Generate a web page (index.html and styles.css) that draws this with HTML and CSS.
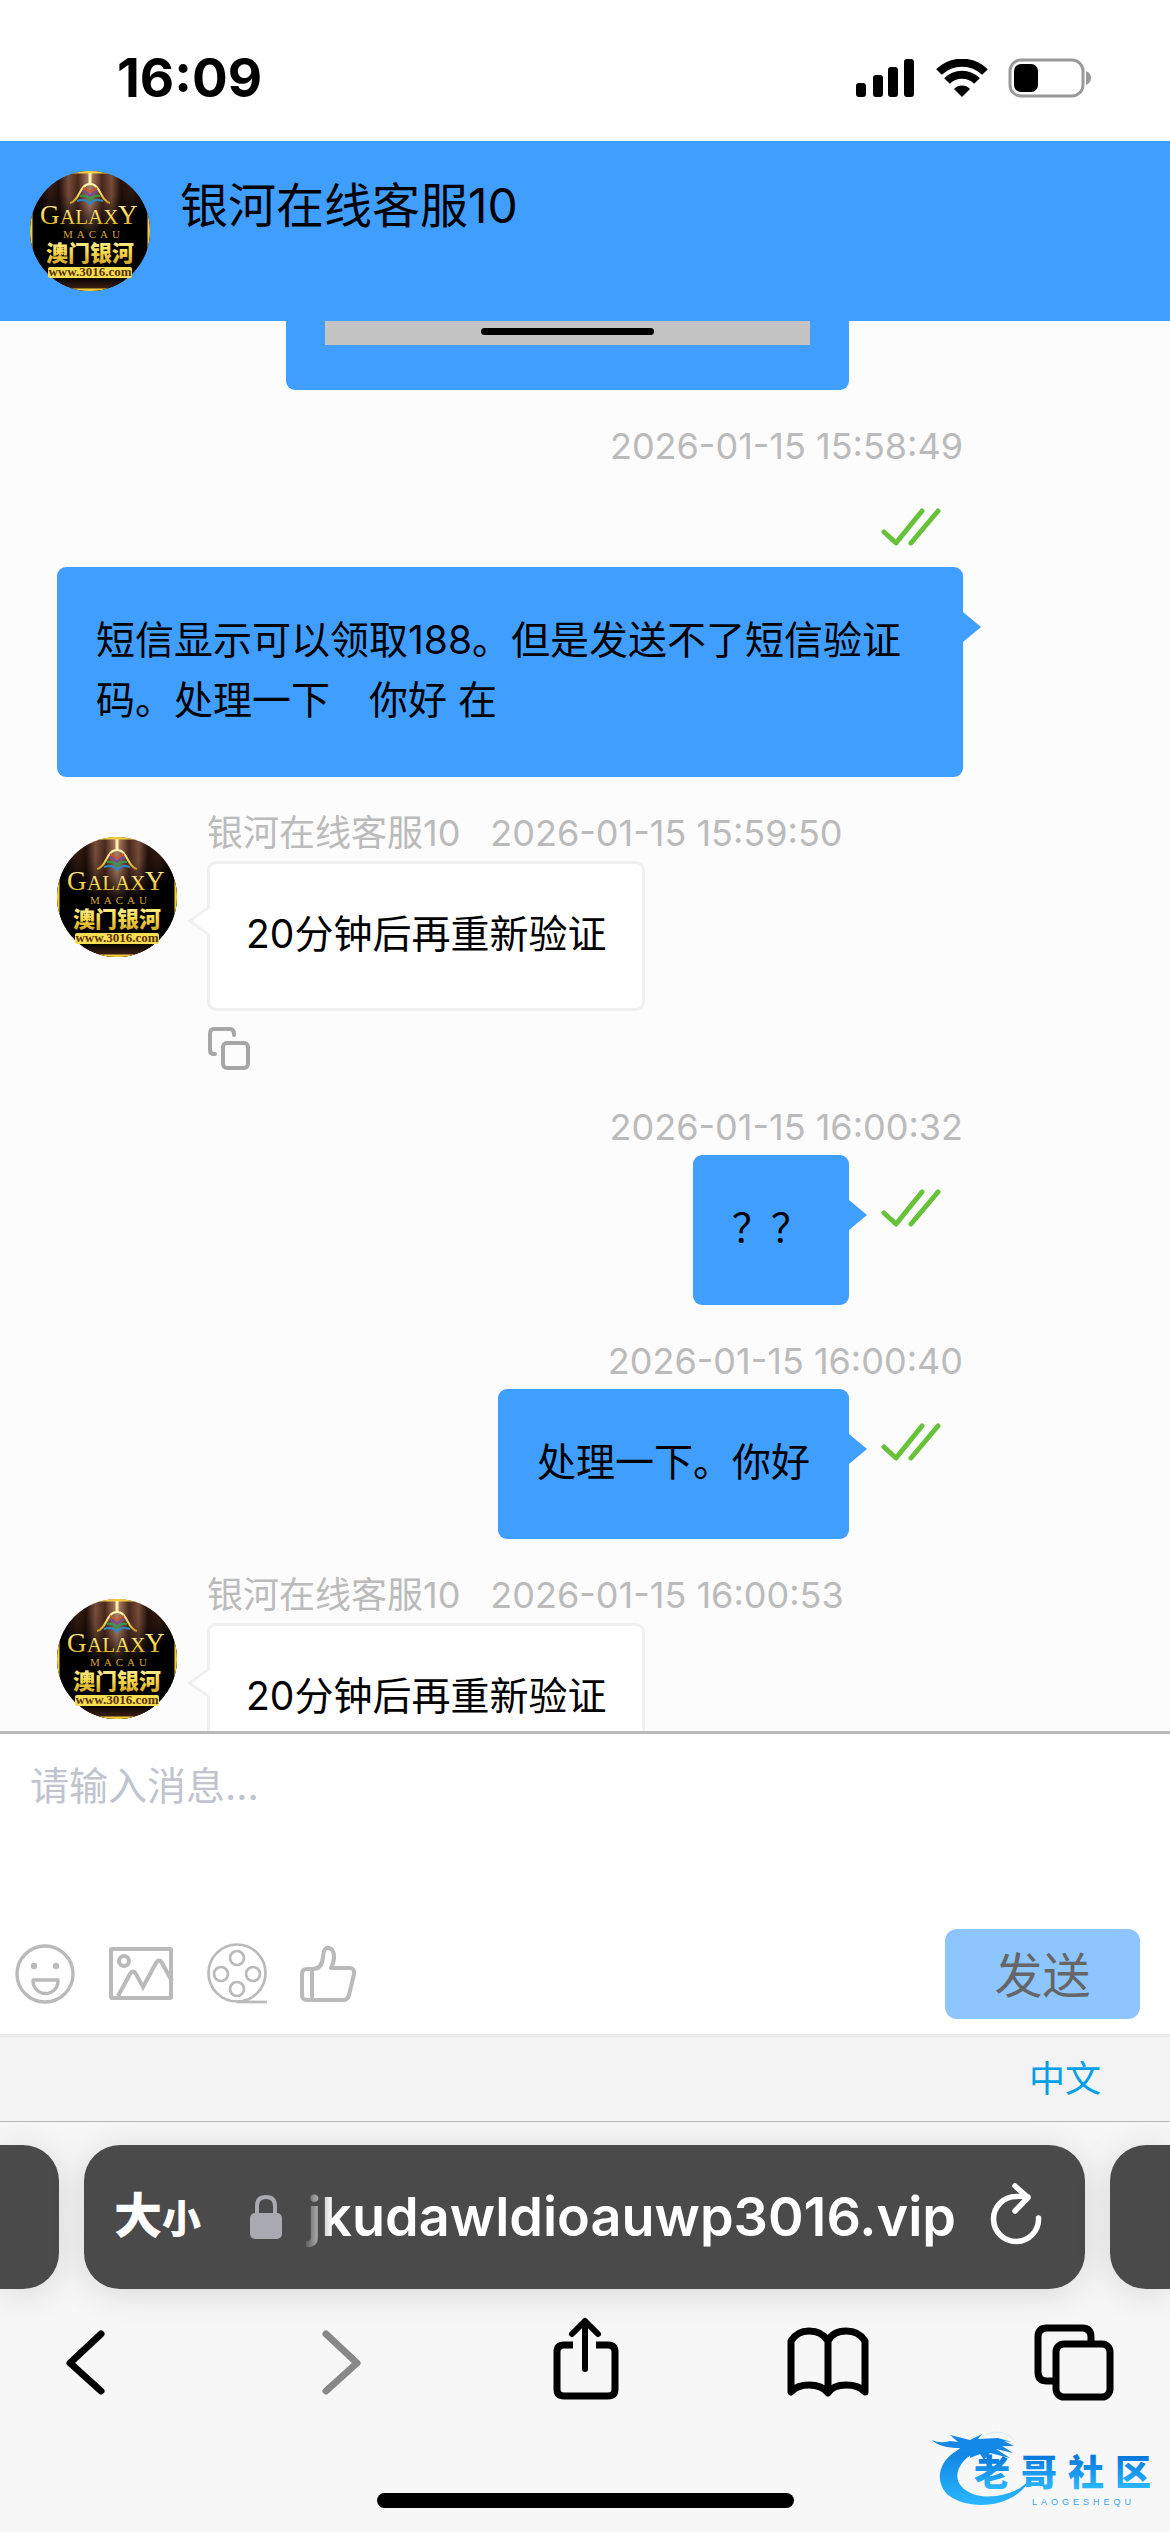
FILE: index.html
```html
<!DOCTYPE html>
<html lang="zh-CN">
<head>
<meta charset="utf-8">
<meta name="viewport" content="width=device-width">
<title>银河在线客服10</title>
<link rel="stylesheet" href="styles.css">
</head>
<body>
<svg class="defs" aria-hidden="true">
  <defs>
    <linearGradient id="gold" x1="0" y1="0" x2="0" y2="1">
      <stop offset="0" stop-color="#fff6b8"/><stop offset="0.55" stop-color="#f5d84a"/><stop offset="1" stop-color="#c99a1e"/>
    </linearGradient>
    <linearGradient id="curtain" x1="0" y1="0" x2="1" y2="0">
      <stop offset="0" stop-color="#2a140c"/><stop offset="0.16" stop-color="#5d3322"/><stop offset="0.24" stop-color="#2b130b"/>
      <stop offset="0.32" stop-color="#8a5a43"/><stop offset="0.4" stop-color="#4f2b1e"/><stop offset="0.5" stop-color="#c08c70"/>
      <stop offset="0.6" stop-color="#4f2b1e"/><stop offset="0.68" stop-color="#8a5a43"/><stop offset="0.76" stop-color="#2b130b"/>
      <stop offset="0.86" stop-color="#5d3322"/><stop offset="1" stop-color="#2a140c"/>
    </linearGradient>
    <radialGradient id="dark" gradientUnits="userSpaceOnUse" cx="60" cy="0" r="74">
      <stop offset="0" stop-color="#000" stop-opacity="0"/><stop offset="0.45" stop-color="#000" stop-opacity="0.2"/>
      <stop offset="0.9" stop-color="#000"/><stop offset="1" stop-color="#000"/>
    </radialGradient>
    <linearGradient id="floor" x1="0" y1="0" x2="0" y2="1">
      <stop offset="0" stop-color="#000"/><stop offset="1" stop-color="#4a2618"/>
    </linearGradient>
    <linearGradient id="brand" gradientUnits="userSpaceOnUse" x1="0" y1="12" x2="0" y2="80">
      <stop offset="0" stop-color="#0878dc"/><stop offset="1" stop-color="#2bb8ff"/>
    </linearGradient>
    <linearGradient id="brandText" gradientUnits="userSpaceOnUse" x1="0" y1="30" x2="0" y2="63">
      <stop offset="0" stop-color="#0878dc"/><stop offset="1" stop-color="#2bb8ff"/>
    </linearGradient>
    <clipPath id="disc"><circle cx="60" cy="60" r="60"/></clipPath>
    <symbol id="galaxy" viewBox="0 0 120 120">
      <g clip-path="url(#disc)">
        <rect width="120" height="120" fill="url(#curtain)"/>
        <rect width="120" height="120" fill="url(#dark)"/>
        <rect y="106" width="120" height="14" fill="url(#floor)"/>
        <path d="M1 0V120M119 0V120M0 1H120M0 119H120" stroke="#f2cd3c" stroke-width="3"/>
        <path d="M60 2V13" stroke="#fff2b0" stroke-width="3"/>
        <path d="M40 32C50 30 49 13 60 13S70 30 80 32" fill="none" stroke="url(#gold)" stroke-width="2"/>
        <path d="M53 17 60 21 67 17" fill="none" stroke="#c9582c" stroke-width="2"/>
        <path d="M52 20Q57 21 60 25Q63 21 68 20" fill="none" stroke="#7a4a9c" stroke-width="2"/>
        <path d="M50 25Q57 24 60 29Q63 24 70 25" fill="none" stroke="#2e9a4b" stroke-width="2"/>
        <path d="M47 30Q56 27 60 33Q64 27 73 30" fill="none" stroke="#2b87c8" stroke-width="2"/>
      </g>
      <text class="logo-serif" x="10" y="53" font-size="27" fill="url(#gold)">G</text>
      <text class="logo-serif" x="30" y="53" font-size="21" fill="url(#gold)">ALAX</text>
      <text class="logo-serif" x="88" y="53" font-size="27" fill="url(#gold)">Y</text>
      <text class="logo-serif" x="33" y="67" font-size="11" letter-spacing="4" fill="#d6a33c">MACAU</text>
      <text class="logo-han" x="16" y="90" font-size="22" fill="url(#gold)">澳门银河</text>
      <rect x="18" y="96" width="84" height="11" rx="2" fill="#f6df52"/>
      <text class="logo-url" x="60" y="105" font-size="13" text-anchor="middle" fill="#5a3005">www.3016.com</text>
    </symbol>
    <symbol id="ticks" viewBox="0 0 60 38">
      <path d="M3 24 15 35 41 3M30 35 57 3" fill="none" stroke="#67c23a" stroke-width="5" stroke-linecap="round" stroke-linejoin="round"/>
    </symbol>
  </defs>
</svg>

<div class="screen">
  <div class="status-bar">
    <span class="clock">16:09</span>
    <div class="status-icons">
      <svg width="60" height="38" viewBox="0 0 60 38"><rect y="24" width="10" height="14" rx="3"/><rect x="17" y="16" width="10" height="22" rx="3"/><rect x="32" y="8" width="10" height="30" rx="3"/><rect x="48" width="10" height="38" rx="3"/></svg>
      <svg width="52" height="38" viewBox="0 0 52 38"><g fill="none" stroke="#000" stroke-width="8"><path d="M3 13A33 33 0 0 1 49 13"/><path d="M11 22A21 21 0 0 1 41 22"/></g><path d="M26 38 18 30A11 11 0 0 1 34 30Z"/></svg>
      <svg width="84" height="40" viewBox="0 0 84 40"><rect x="2" y="2" width="73" height="36" rx="11" fill="none" stroke="#9a9a9a" stroke-width="3"/><rect x="6" y="6" width="24" height="28" rx="7"/><path d="M78 13Q83 15 83 20T78 27Z" fill="#9a9a9a"/></svg>
    </div>
  </div>

  <header class="chat-header">
    <svg class="avatar" role="img" aria-label="头像"><use href="#galaxy"/></svg>
    <h1 class="chat-title">银河在线客服10</h1>
  </header>

  <main class="messages">
    <div class="message own">
      <div class="own-row">
        <div class="bubble picture"><div class="picture-end"><span></span></div></div>
        <div class="receipt"></div>
      </div>
    </div>
    <div class="message own">
      <div class="meta"><time>2026-01-15 15:58:49</time></div>
      <div class="own-row stacked">
        <div class="bubble blue">短信显示可以领取188。但是发送不了短信验证码。处理一下　你好 在</div>
        <div class="receipt"><svg class="ticks"><use href="#ticks"/></svg></div>
      </div>
    </div>
    <div class="message agent">
      <svg class="avatar" role="img" aria-label="头像"><use href="#galaxy"/></svg>
      <div class="agent-body">
        <div class="meta"><span>银河在线客服10</span><time>2026-01-15 15:59:50</time></div>
        <div class="bubble white">20分钟后再重新验证</div>
        <button class="copy" type="button" aria-label="复制"><svg width="44" height="44" viewBox="0 0 44 44"><g fill="none" stroke="#a6a6a6" stroke-width="4" stroke-linecap="round"><path d="M8 27H7Q3 27 3 23V7Q3 2 7 2H23Q27 2 27 7V8"/><rect x="16" y="16" width="25" height="25" rx="4"/></g></svg></button>
      </div>
    </div>
    <div class="message own">
      <div class="meta"><time>2026-01-15 16:00:32</time></div>
      <div class="own-row">
        <div class="bubble blue">？？</div>
        <div class="receipt"><svg class="ticks"><use href="#ticks"/></svg></div>
      </div>
    </div>
    <div class="message own">
      <div class="meta"><time>2026-01-15 16:00:40</time></div>
      <div class="own-row">
        <div class="bubble blue">处理一下。你好</div>
        <div class="receipt"><svg class="ticks"><use href="#ticks"/></svg></div>
      </div>
    </div>
    <div class="message agent">
      <svg class="avatar" role="img" aria-label="头像"><use href="#galaxy"/></svg>
      <div class="agent-body">
        <div class="meta"><span>银河在线客服10</span><time>2026-01-15 16:00:53</time></div>
        <div class="bubble white">20分钟后再重新验证</div>
      </div>
    </div>
  </main>

  <form class="composer">
    <textarea class="entry" aria-label="消息" placeholder="请输入消息..."></textarea>
    <div class="tools">
      <button type="button" aria-label="表情"><svg width="60" height="60" viewBox="0 0 60 60"><g fill="none" stroke="#bababa" stroke-width="3.4"><circle cx="30" cy="30" r="28"/><path d="M18 36H43V37A12 12 0 0 1 18 37Z" stroke-linejoin="round"/></g><circle cx="19" cy="22" r="3.2" fill="#bababa"/><circle cx="41" cy="22" r="3.2" fill="#bababa"/></svg></button>
      <button type="button" aria-label="图片"><svg width="66" height="60" viewBox="0 0 66 60"><g fill="none" stroke="#bababa" stroke-width="4"><rect x="3" y="5" width="60" height="49" rx="1"/><circle cx="16" cy="17" r="5"/><path d="M10 52 22 30Q25 25 28 30L35 43 48 19Q51 14 54 19L64 37"/></g></svg></button>
      <button type="button" aria-label="视频"><svg width="60" height="62" viewBox="0 0 60 62"><g fill="none" stroke="#bababa" stroke-width="2.7"><circle cx="30" cy="30" r="28.5"/><path d="M30 59H60"/><circle cx="30" cy="15" r="7"/><circle cx="30" cy="46" r="7"/><circle cx="14" cy="31" r="7"/><circle cx="46" cy="31" r="7"/></g></svg></button>
      <button type="button" aria-label="点赞"><svg width="58" height="58" viewBox="0 0 58 58"><g fill="none" stroke="#bababa" stroke-width="4" stroke-linejoin="round"><path d="M7 24H13Q22 24 23 12L24 6Q26 2 29 3Q34 4 34 12Q34 18 31 23H49Q55 23 54 29L49 50Q48 55 43 55H7Q2 55 2 50V29Q2 24 7 24Z"/><path d="M12 24V55"/></g></svg></button>
      <button class="send" type="submit" disabled>发送</button>
    </div>
  </form>

  <div class="language"><a href="#">中文</a></div>

  <footer class="browser">
    <div class="tabs">
      <div class="tab tab-previous"></div>
      <div class="tab tab-current">
        <button class="reader" type="button" aria-label="大小"><b>大</b><b class="small">小</b></button>
        <svg class="lock" width="32" height="46" viewBox="0 0 32 46"><path d="M7 22V12Q7 3 16 3T25 12V22" fill="none" stroke="#a9aab1" stroke-width="4"/><rect y="19" width="32" height="26" rx="5" fill="#a9aab1"/></svg>
        <div class="address"><span>jkudawldioauwp3016.vip</span></div>
        <button class="reload" type="button" aria-label="刷新"><svg width="54" height="68" viewBox="0 0 54 68"><path d="M50.5 35A22.5 22.5 0 1 1 28 13.5Q34 13 40 14M27 3 40 14.500 27 28" fill="none" stroke="#fff" stroke-width="5.500" stroke-linecap="round" stroke-linejoin="round"/></svg></button>
      </div>
      <div class="tab tab-next"></div>
    </div>
    <nav class="browser-nav">
      <button type="button" aria-label="后退"><svg width="96" height="88" viewBox="0 0 96 88"><path d="M64 18 33 47 64 75" fill="none" stroke="#000" stroke-width="7" stroke-linecap="round" stroke-linejoin="round"/></svg></button>
      <button type="button" aria-label="前进" disabled><svg width="96" height="88" viewBox="0 0 96 88"><path d="M42 18 73 47 42 75" fill="none" stroke="#888" stroke-width="7" stroke-linecap="round" stroke-linejoin="round"/></svg></button>
      <button type="button" aria-label="分享"><svg width="96" height="88" viewBox="0 0 96 88"><g fill="none" stroke="#000" stroke-width="7" stroke-linejoin="round"><path d="M41 29H32Q25 29 25 36V73Q25 80 32 80H76Q83 80 83 73V36Q83 29 76 29H64"/><path d="M53 53V5M40 18 53 5 66 18" stroke-width="6" stroke-linecap="round"/></g></svg></button>
      <button type="button" aria-label="书签"><svg width="96" height="88" viewBox="0 0 96 88"><path d="M49 77Q43 69 30 69Q18 69 12 76V25Q18 15 30 15Q43 15 49 25Q54 15 67 15Q80 15 86 25V76Q80 69 67 69Q54 69 49 77ZV25" fill="none" stroke="#000" stroke-width="7" stroke-linejoin="round"/></svg></button>
      <button type="button" aria-label="标签页"><svg width="96" height="88" viewBox="0 0 96 88"><g fill="none" stroke="#000" stroke-width="7"><path d="M29 65H21Q12 65 12 56V21Q12 12 21 12H56Q65 12 65 21V26"/><rect x="30" y="28" width="54" height="53" rx="8"/></g></svg></button>
    </nav>
    <div class="home-indicator"></div>
  </footer>

  <svg class="watermark" width="232" height="84" viewBox="0 0 232 84" role="img" aria-label="老哥社区">
    <path d="M38 20C10 28 2 54 18 69C40 86 86 82 101 52C88 70 54 76 37 65C20 55 26 34 50 24Z" fill="url(#brand)"/>
    <path d="M2 14Q10 18 20 15L28 16 20 9 40 14 52 8 48 13 68 12 82 16 74 15 84 20 72 20 83 27 66 23 80 32 60 27 54 34 50 28 40 32 40 26Q30 26 22 30L30 22Q10 22 2 14Z" fill="#1488e6"/>
    <path d="M56 8Q74 2 84 14" fill="none" stroke="#d5eafa"/>
    <text class="brand-name" x="44" y="60" font-size="36" fill="url(#brandText)">老</text>
    <text class="brand-name" x="91" y="60" font-size="36" fill="url(#brandText)">哥</text>
    <text class="brand-name" x="138" y="60" font-size="36" fill="url(#brandText)">社</text>
    <text class="brand-name" x="185" y="60" font-size="36" fill="url(#brandText)">区</text>
    <text class="brand-latin" x="102" y="79" font-size="9" letter-spacing="4" fill="#35a4ee">LAOGESHEQU</text>
  </svg>
</div>
</body>
</html>
```
FILE: styles.css
```css
* { box-sizing: border-box; }

body {
  margin: 0;
  background: #fff;
  color: #000;
  font-family: Inter, "Noto Sans CJK SC", sans-serif;
  font-weight: 400;
}

svg { display: block; flex: none; }

button {
  margin: 0;
  padding: 0;
  border: 0;
  background: none;
  color: inherit;
  font: inherit;
}

.defs { position: absolute; width: 0; height: 0; }

.screen {
  position: relative;
  display: flex;
  flex-direction: column;
  height: 100vh;
}

.status-bar {
  flex: none;
  display: flex;
  align-items: center;
  justify-content: space-between;
  padding: 37px 78px 23px 117px;
  height: 141px;
}
.clock { font-size: 53px; font-weight: 700; line-height: 60px; }
.status-icons { display: flex; align-items: center; gap: 20px; }

.chat-header {
  flex: none;
  display: flex;
  gap: 30px;
  padding: 30px;
  background: #409eff;
}
.avatar { width: 120px; height: 120px; }
.chat-title { margin: 0; font-size: 48px; font-weight: 400; line-height: 70px; }

.messages {
  flex: 1;
  min-height: 0;
  overflow: hidden;
  display: flex;
  flex-direction: column;
  gap: 28px;
  padding: 0 207px 0 57px;
  background: #fcfcfc;
}
.message { flex: none; }

.meta {
  display: flex;
  gap: 30px;
  color: #bbb;
  font-size: 36px;
  line-height: 56px;
  white-space: nowrap;
}
.own .meta { justify-content: flex-end; }

.own-row { display: flex; justify-content: flex-end; }
.own-row.stacked { flex-direction: column-reverse; align-items: flex-end; }
.receipt { flex: none; width: 114px; padding: 34px 0 0 32px; }
.stacked .receipt { padding-bottom: 21px; }
.ticks { width: 60px; height: 38px; }

.bubble {
  position: relative;
  padding: 43px 39px 47px;
  border-radius: 9px;
  font-size: 39px;
  line-height: 60px;
}
.blue { background: #409eff; }
.blue::after {
  content: "";
  position: absolute;
  left: 100%;
  top: 45px;
  border: 15px solid transparent;
  border-left: 18px solid #409eff;
  border-right: 0;
}
.picture {
  flex: 0 1 563px;
  padding: 0 39px 45px;
  border-radius: 0 0 9px 9px;
  background: #409eff;
}
.picture-end {
  display: flex;
  justify-content: center;
  padding: 7px 0 10px;
  background: #c4c4c4;
}
.picture-end span { width: 173px; height: 7px; border-radius: 4px; background: #000; }

.agent { display: flex; gap: 30px; }
.agent .avatar { margin-top: 32px; }
.agent-body { display: flex; flex-direction: column; align-items: flex-start; }
.white { padding: 40px 36px 44px; border: 3px solid #f0f0f0; background: #fff; }
.white::before,
.white::after {
  content: "";
  position: absolute;
  right: 100%;
  border: solid transparent;
  border-left: 0;
}
.white::before {
  top: 41px;
  border-width: 16px 23px 16px 0;
  border-right-color: #f0f0f0;
}
.white::after {
  top: 44px;
  border-width: 13px 18px 13px 0;
  border-right-color: #fff;
}
.copy { margin-top: 16px; }

.composer {
  flex: none;
  border-top: 3px solid #bababa;
  background: #fff;
}
.entry {
  display: block;
  width: 100%;
  height: 195px;
  padding: 22px 30px;
  border: 0;
  outline: 0;
  resize: none;
  font: 400 39px/60px Inter, "Noto Sans CJK SC", sans-serif;
}
.entry::placeholder { color: #c0c4cc; opacity: 1; }
.tools {
  display: flex;
  align-items: center;
  gap: 33px;
  padding: 0 30px 15px 15px;
}
.send {
  margin-left: auto;
  width: 195px;
  height: 90px;
  padding-bottom: 4px;
  border-radius: 12px;
  background: #8cc5ff;
  color: #666;
  font-size: 48px;
}

.language {
  flex: none;
  display: flex;
  justify-content: flex-end;
  padding: 14px 69px;
  border-top: 3px solid #ebebeb;
  border-bottom: 1px solid #b8b8b8;
  background: #f3f3f3;
}
.language a {
  color: #00a0e9;
  font-size: 36px;
  line-height: 56px;
  text-decoration: none;
}

.browser { flex: none; overflow: hidden; padding: 23px 0 24px; background: #f7f7f7; }
.tabs { display: flex; gap: 25px; }
.tab {
  height: 144px;
  background: #4a4a4a;
  box-shadow: 0 4px 36px rgba(0, 0, 0, 0.13);
}
.tab-previous { flex: 0 0 59px; border-radius: 0 36px 36px 0; }
.tab-next { flex: 0 0 60px; border-radius: 36px 0 0 36px; }
.tab-current {
  flex: 1;
  min-width: 0;
  display: flex;
  align-items: center;
  padding: 0 43px 0 30px;
  border-radius: 36px;
  color: #fff;
}
.reader { display: flex; align-items: baseline; width: 136px; font-weight: 700; }
.reader b { font-size: 48px; line-height: 60px; }
.reader .small { font-size: 39px; }
.address {
  flex: 1;
  min-width: 0;
  display: flex;
  justify-content: flex-end;
  overflow: hidden;
  margin: 0 32px 0 20px;
  font-size: 54px;
  font-weight: 600;
  line-height: 72px;
  -webkit-mask-image: linear-gradient(90deg, transparent, #000 30px);
  mask-image: linear-gradient(90deg, transparent, #000 30px);
}

.browser-nav {
  display: flex;
  justify-content: space-between;
  padding: 27px 48px 0 37px;
}
.home-indicator {
  width: 417px;
  height: 15px;
  margin: 89px auto 0;
  border-radius: 8px;
  background: #000;
}

.watermark { position: absolute; right: 8px; bottom: 22px; }

.logo-serif { font-family: "Liberation Serif", serif; }
.logo-han { font-family: "Noto Sans CJK SC", sans-serif; font-weight: 900; }
.logo-url { font-family: "Liberation Serif", serif; font-weight: 700; }
.brand-name { font-family: "Noto Sans CJK SC", sans-serif; font-weight: 900; }
.brand-latin { font-family: "Liberation Sans", sans-serif; }
```
